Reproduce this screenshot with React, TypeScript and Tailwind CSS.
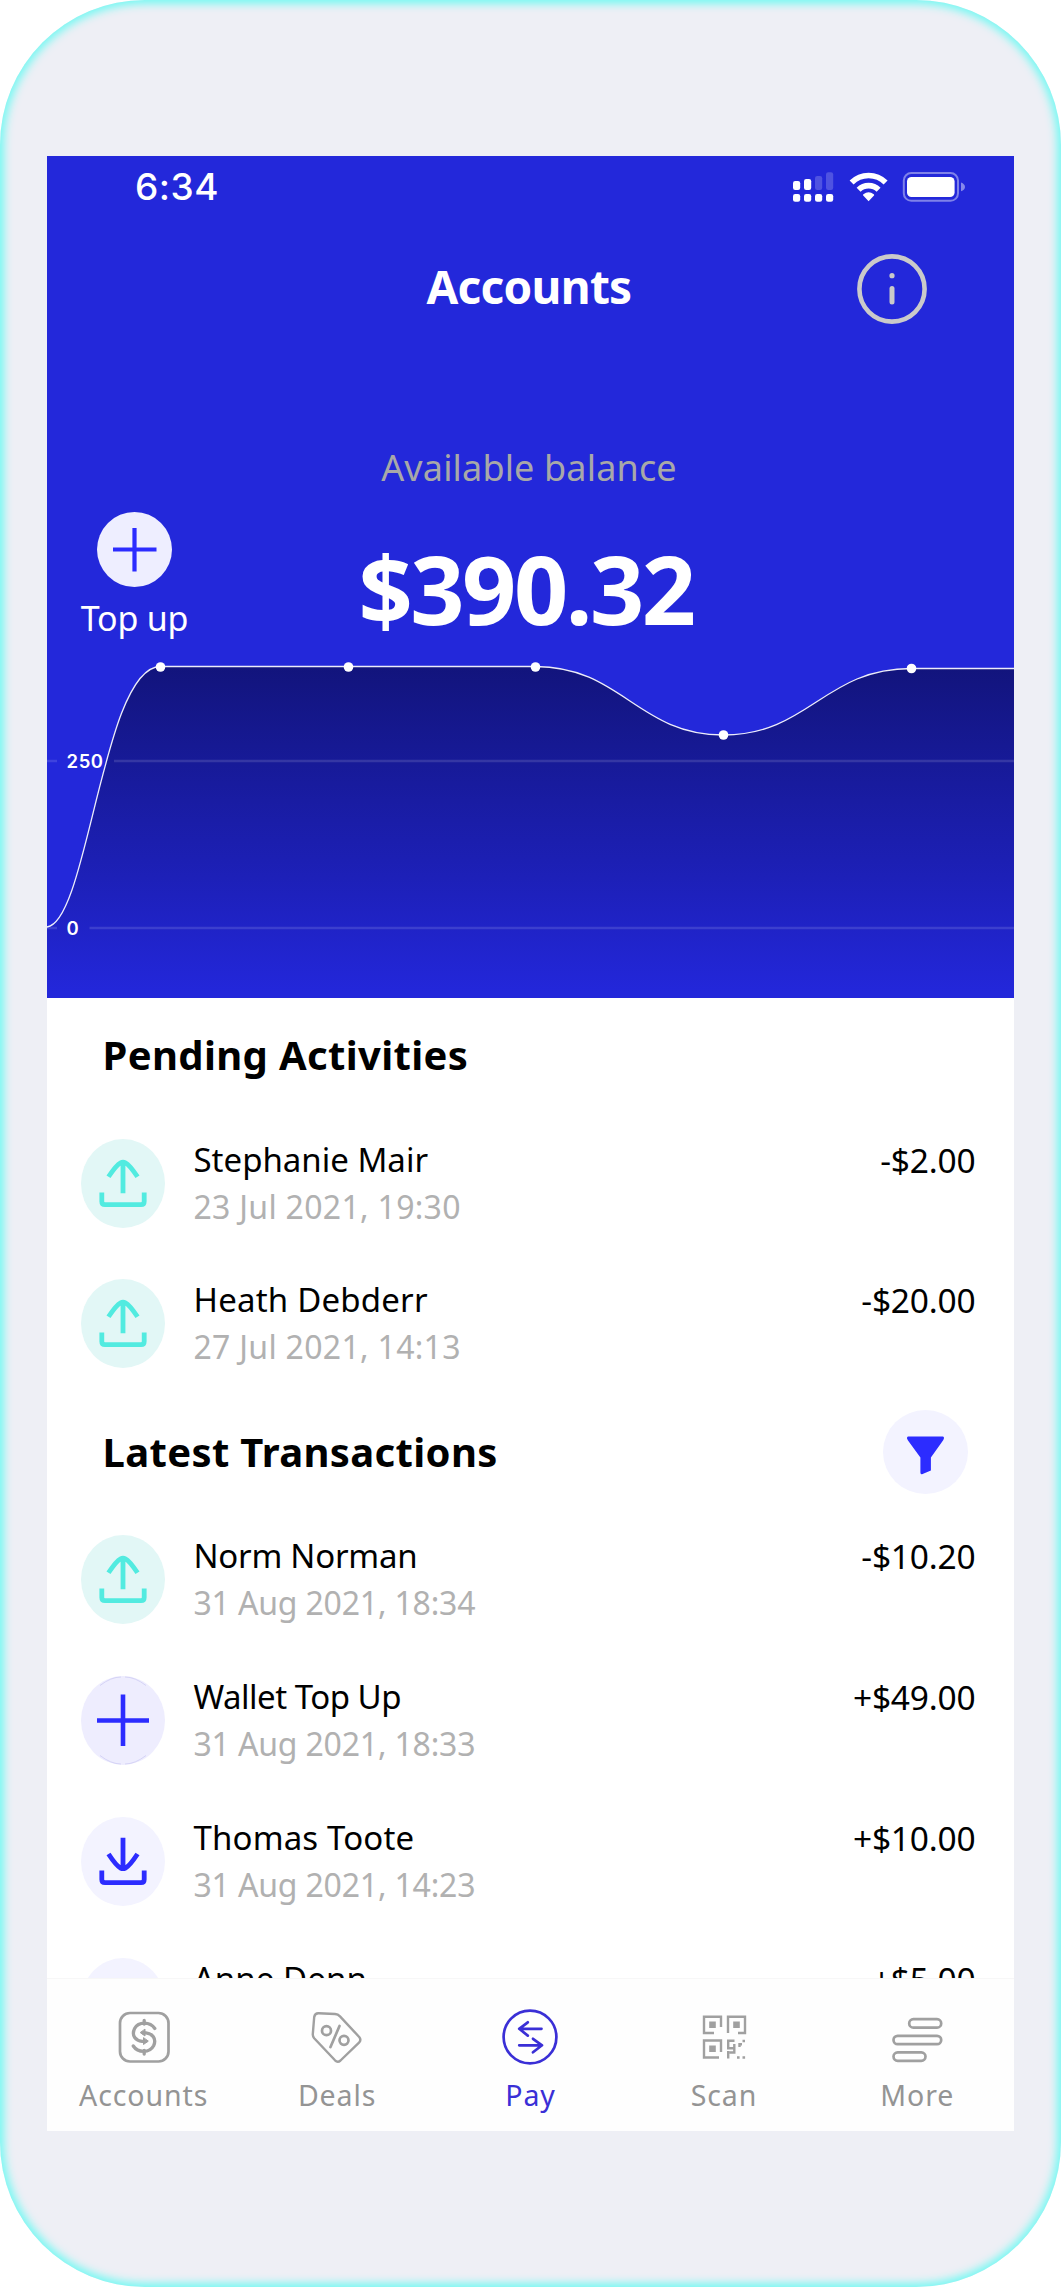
import type { ReactNode } from 'react'

type Kind = 'sent' | 'received' | 'topup'

interface Entry {
  name: string
  date: string
  amount: string
  kind: Kind
  nameTracking: string
  dateTracking: string
}

const pending: Entry[] = [
  { name: 'Stephanie Mair', date: '23 Jul 2021, 19:30', amount: '-$2.00', kind: 'sent', nameTracking: 'tracking-[0px]', dateTracking: 'tracking-[0.3px]' },
  { name: 'Heath Debderr', date: '27 Jul 2021, 14:13', amount: '-$20.00', kind: 'sent', nameTracking: 'tracking-[0.2px]', dateTracking: 'tracking-[0.3px]' },
]

const latest: Entry[] = [
  { name: 'Norm Norman', date: '31 Aug 2021, 18:34', amount: '-$10.20', kind: 'sent', nameTracking: 'tracking-[-0.25px]', dateTracking: 'tracking-[-0.18px]' },
  { name: 'Wallet Top Up', date: '31 Aug 2021, 18:33', amount: '+$49.00', kind: 'topup', nameTracking: 'tracking-[-0.5px]', dateTracking: 'tracking-[-0.18px]' },
  { name: 'Thomas Toote', date: '31 Aug 2021, 14:23', amount: '+$10.00', kind: 'received', nameTracking: 'tracking-[0.15px]', dateTracking: 'tracking-[-0.18px]' },
  { name: 'Anne Denn', date: '31 Aug 2021, 14:20', amount: '+$5.00', kind: 'received', nameTracking: 'tracking-[0.1px]', dateTracking: 'tracking-[-0.18px]' },
]

function StatusIcons() {
  return (
    <svg width="173" height="30" viewBox="0 0 173 30" fill="#fff">
      <rect x="0" y="9" width="7.2" height="9" rx="2.2" />
      <rect x="11" y="7" width="7.2" height="11" rx="2.2" />
      <rect x="22" y="4" width="7.2" height="14" rx="2.2" opacity="0.2" />
      <rect x="33" y="0.3" width="7.2" height="17.7" rx="2.2" opacity="0.2" />
      <rect x="0" y="22" width="7.2" height="7.7" rx="2.2" />
      <rect x="11" y="22" width="7.2" height="7.7" rx="2.2" />
      <rect x="22" y="22" width="7.2" height="7.7" rx="2.2" />
      <rect x="33" y="22" width="7.2" height="7.7" rx="2.2" />
      <g fill="none" stroke="#fff" strokeWidth="5.6">
        <path d="M58.6 10.6a24 24 0 0 1 34 0" />
        <path d="M65.6 17.7a14.2 14.2 0 0 1 20 0" />
      </g>
      <path d="M75.6 29.2 70.2 23.6q-.6-.8.2-1.4a8.6 8.6 0 0 1 10.4 0q.8.6.2 1.4z" />
      <rect x="110.8" y="1" width="54.2" height="27.8" rx="7.5" fill="none" stroke="#fff" strokeWidth="2" opacity="0.42" />
      <rect x="114" y="5" width="47.6" height="20" rx="4.5" />
      <path d="M168 10.5q4 1.6 4 4.4t-4 4.4z" opacity="0.45" />
    </svg>
  )
}

function BalanceChart() {
  const line = 'M0 285C41 280 56 24.5 113.5 24.5H488.5C574 24.5 591 93 676.5 93S777 26.5 864.5 26.5H967'
  return (
    <svg className="block" width="967" height="356" viewBox="0 0 967 356">
      <defs>
        <linearGradient id="fade" x1="0" y1="24" x2="0" y2="350" gradientUnits="userSpaceOnUse">
          <stop offset="0" stopColor="#12147c" />
          <stop offset="0.3" stopColor="#171a98" />
          <stop offset="0.65" stopColor="#1d20b8" />
          <stop offset="1" stopColor="#2327da" />
        </linearGradient>
      </defs>
      <path d={`${line}V356H0Z`} fill="url(#fade)" />
      <g stroke="#fff" strokeOpacity="0.13" strokeWidth="2.6">
        <path d="M0 119H10M67 119H967M0 286H10M42.5 286H967" />
      </g>
      <path d={line} fill="none" stroke="#fff" strokeOpacity="0.92" strokeWidth="1.3" />
      {[[113.5, 25], [301.5, 25], [488.5, 25], [676.5, 93], [864.5, 26.5]].map(([x, y]) => (
        <circle key={x} cx={x} cy={y} r="4.8" fill="#fff" />
      ))}
      <g fill="#fff" fontFamily="Inter, sans-serif" fontWeight="600" fontSize="18.5" letterSpacing="0.6">
        <text x="19.5" y="126.2">250</text>
        <text x="19.5" y="293">0</text>
      </g>
    </svg>
  )
}

function EntryIcon({ kind }: { kind: Kind }) {
  if (kind === 'topup') {
    return (
      <svg width="84" height="89" viewBox="0 0 84 89" className="shrink-0">
        <ellipse cx="42" cy="44.5" rx="42" ry="44.5" fill="#eeedfe" />
        <path d="M19 9.5Q30 1 40 1M44 1Q54 1 65 9.5M19 79.5Q30 88 40 88M44 88Q54 88 65 79.5" fill="none" stroke="#d5d3f6" strokeWidth="1" />
        <path d="M16 44.5H68M42 18.5V70" stroke="#2c2cff" strokeWidth="4.6" />
      </svg>
    )
  }
  const sent = kind === 'sent'
  return (
    <svg width="84" height="89" viewBox="0 0 84 89" className="shrink-0">
      <ellipse cx="42" cy="44.5" rx="42" ry="44.5" fill={sent ? '#e2f7f6' : '#f3f3ff'} />
      <g fill="none" stroke={sent ? '#52ebe0' : '#2c2cff'} strokeWidth="4.8">
        <path d="M20.8 53.5V62.5Q20.8 65.7 24 65.7H60Q63.2 65.7 63.2 62.5V53.5" />
        {sent ? (
          <path d="M42 54.3V24M27.5 37.8C32 31 37 25 39.5 23.8Q42 22.6 44.5 23.8C47 25 52 31 56.5 37.8" />
        ) : (
          <path d="M42 20.7V51M27.5 37C32 43.8 37 49.8 39.5 51Q42 52.2 44.5 51C47 49.8 52 43.8 56.5 37" />
        )}
      </g>
    </svg>
  )
}

function EntryRow({ entry }: { entry: Entry }) {
  return (
    <li className="flex h-[89px] items-start pr-[38.5px] pl-[34px]">
      <EntryIcon kind={entry.kind} />
      <div className="-mt-[2px] ml-[28.5px] flex-1 whitespace-nowrap">
        <p className={`text-[33px] leading-[46px] text-black ${entry.nameTracking}`}>{entry.name}</p>
        <p className={`text-[32px] leading-[48px] text-[#b1b1b1] ${entry.dateTracking}`}>{entry.date}</p>
      </div>
      <p className="-mt-[2px] text-[33.5px] leading-[46px] tracking-[-0.2px] text-black">{entry.amount}</p>
    </li>
  )
}

function Tab({ label, active, children }: { label: string; active?: boolean; children: ReactNode }) {
  return (
    <button className={`flex flex-col items-center pt-[30px] ${active ? 'text-[#3a2fd6]' : 'text-[#949494]'}`}>
      <svg width="56" height="56" viewBox="0 0 56 56" fill="none" stroke={active ? '#3a2fd6' : '#a0a0a0'} strokeWidth="2.7" strokeLinecap="round" strokeLinejoin="round">
        {children}
      </svg>
      <span className="mt-[10px] text-[28.5px] leading-[40px] tracking-[0.9px]">{label}</span>
    </button>
  )
}

export default function App() {
  return (
    <div className="h-[2287px] w-[1061px] bg-white">
      <div className="h-full rounded-[145px] bg-[#eeeff5] px-[47px] pt-[155.5px] font-['Noto_Sans',sans-serif] shadow-[inset_0_0_9px_4px_#76f9f3]">
        <div className="flex h-[1975px] flex-col overflow-hidden bg-white">
          <header className="h-[842px] shrink-0 bg-[#2328da] text-white">
            <div className="flex h-[63px] items-center justify-between pr-[48px] pl-[88px]">
              <span className="font-['Inter',sans-serif] text-[37px] font-medium tracking-[0.5px]">6:34</span>
              <StatusIcons />
            </div>
            <div className="grid h-[141px] grid-cols-3 items-center">
              <h1 className="col-start-2 pr-[3px] pb-[7px] text-center text-[46px] leading-[60px] font-bold tracking-[-0.75px]">Accounts</h1>
              <svg className="mr-[87px] justify-self-end" width="70" height="70" viewBox="0 0 70 70" fill="none" stroke="#cacaca">
                <circle cx="35" cy="35" r="32.6" strokeWidth="4.6" />
                <path d="M35 34.5V48" strokeWidth="5" strokeLinecap="round" />
                <circle cx="35" cy="21.7" r="2.6" fill="#cacaca" stroke="none" />
              </svg>
            </div>
            <p className="mt-[83px] pr-[3px] text-center text-[36px] leading-[50px] tracking-[0.15px] text-[#a8a8a8]">Available balance</p>
            <div className="flex h-[149px]">
              <button className="flex w-[175px] flex-col items-center pt-[19px]">
                <svg width="75" height="75" viewBox="0 0 75 75">
                  <circle cx="37.5" cy="37.5" r="37.5" fill="#eeeeff" />
                  <path d="M16 37.5H59.5M37.5 16V59.5" stroke="#2c2cff" strokeWidth="4.2" />
                </svg>
                <span className="mt-[9.5px] text-[34px] leading-[45px] tracking-[-0.2px] whitespace-nowrap">Top up</span>
              </button>
              <p className="mr-[184px] flex-1 pt-[45.5px] text-center text-[95px] leading-[100px] font-bold tracking-[-2.5px]">$390.32</p>
            </div>
            <BalanceChart />
          </header>

          <main className="h-[980px] shrink-0 overflow-hidden">
            <h2 className="mt-[27px] pl-[55.5px] text-[40px] leading-[60px] font-bold tracking-[0.35px] text-black">Pending Activities</h2>
            <ul className="mt-[54px] flex flex-col gap-[51.8px]">
              {pending.map((entry) => (
                <EntryRow key={entry.name} entry={entry} />
              ))}
            </ul>
            <div className="mt-[42px] flex h-[84px] items-center justify-between pr-[46.5px] pl-[55.5px]">
              <h2 className="text-[40px] leading-[60px] font-bold tracking-[0.35px] text-black">Latest Transactions</h2>
              <svg width="85" height="84" viewBox="0 0 85 84">
                <ellipse cx="42.5" cy="42" rx="42.5" ry="42" fill="#f3f3ff" />
                <path d="M25.2 26.5H59.8Q61.4 26.5 60.9 28.8L60 30.6 47.9 47.5V60.6L39.6 64Q37.4 65 37.4 62.6V47.5L25 30.6Q23.4 28 24.2 27 24.5 26.5 25.2 26.5Z" fill="#2c2cff" />
              </svg>
            </div>
            <ul className="mt-[41px] flex flex-col gap-[51.8px]">
              {latest.map((entry) => (
                <EntryRow key={entry.name} entry={entry} />
              ))}
            </ul>
          </main>

          <nav className="grid h-[153px] shrink-0 grid-cols-5 border-t border-[#f7f7f7] bg-[#fefefe]">
            <Tab label="Accounts">
              <rect x="4" y="4" width="48.5" height="48.5" rx="10" />
              <path d="M38.8 19.5C34 12.3 22.5 12.3 18.6 19.5 15 27 20 31.8 26 32.3H30M17.3 37C22 44.2 33.7 44.2 37.6 36.8 41 29.5 36 24.4 30 23.8H27M28.2 11.5V15M28.2 41.5V45" strokeWidth="3.3" />
              <path d="M29 20.5V27L24.5 23.8ZM27.5 29V35.5L32 32.3Z" fill="#a0a0a0" strokeWidth="1" />
            </Tab>
            <Tab label="Deals">
              <path d="M9.5 4.3 26 5Q29 5.2 31 7.3L50.2 28Q52.6 31 50 33.7L31.5 51.5Q28.7 54 26 51.3L5.2 29.2Q3.6 27.3 3.8 25L5.2 8Q5.8 4.2 9.5 4.3Z" strokeWidth="2.4" />
              <circle cx="17.5" cy="21.7" r="4.5" />
              <circle cx="35" cy="31.3" r="4.5" />
              <path d="M30.5 17 21.5 38" />
            </Tab>
            <Tab label="Pay" active>
              <circle cx="28" cy="28" r="26.4" />
              <path d="M39.5 19.8H17.2M25.8 13.3 17.2 19.8 25.8 26.6M17.2 36.3H40M31 29.8 40 36.3 31 43.3" />
            </Tab>
            <Tab label="Scan">
              <g strokeLinecap="butt" strokeLinejoin="miter" strokeWidth="2.4">
                <path d="M18 24H8V7.7H25V18M32 24V7.7H49V24H42M23 48.5H8V31.5H25V43" />
                <path d="M13.2 12.5h6.6v6.6h-6.6zM37.2 12.5h6.6v6.6h-6.6zM13.2 36.5h6.6v6.6h-6.6z" fill="#a0a0a0" stroke="none" />
                <path d="M31 31.7H38.5M32.2 31V39.5M31 39.2H39.5M38.3 35V43.5H33.5M32.2 42V49.5M43.5 38V35.2H46M46.5 32H49M41 48.5h2.6M46.5 48.5h2.6" />
              </g>
            </Tab>
            <Tab label="More">
              <rect x="20.2" y="10.2" width="32" height="8.4" rx="4.2" />
              <rect x="4.5" y="26.8" width="47.7" height="8.4" rx="4.2" />
              <rect x="4.5" y="43.4" width="32" height="8.4" rx="4.2" />
            </Tab>
          </nav>
        </div>
      </div>
    </div>
  )
}
